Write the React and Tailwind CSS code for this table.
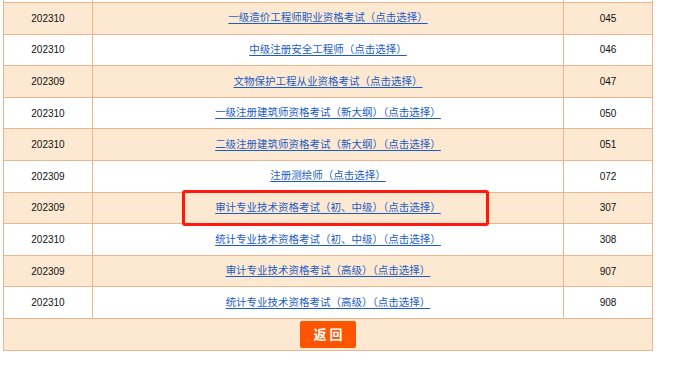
import React from "react";

const rows = [
  ["202310", "一级造价工程师职业资格考试（点击选择）", "045"],
  ["202310", "中级注册安全工程师（点击选择）", "046"],
  ["202309", "文物保护工程从业资格考试（点击选择）", "047"],
  ["202310", "一级注册建筑师资格考试（新大纲）（点击选择）", "050"],
  ["202310", "二级注册建筑师资格考试（新大纲）（点击选择）", "051"],
  ["202309", "注册测绘师（点击选择）", "072"],
  ["202309", "审计专业技术资格考试（初、中级）（点击选择）", "307"],
  ["202310", "统计专业技术资格考试（初、中级）（点击选择）", "308"],
  ["202309", "审计专业技术资格考试（高级）（点击选择）", "907"],
  ["202310", "统计专业技术资格考试（高级）（点击选择）", "908"],
];

const font = { fontFamily: '"Liberation Sans", "Noto Sans CJK SC", sans-serif' };

export default function App() {
  return (
    <div className="relative w-[679px] h-[374px] overflow-hidden bg-white" style={font}>
      <div className="pl-[3px] mt-[-28.6px]">
        <div className="w-[650px] border-l border-[#efb48c]">
          <div className="flex h-[31.6px] border-b border-[#efb48c] bg-white">
            <div className="w-[89px] border-r border-[#efb48c]" />
            <div className="w-[471px] border-r border-[#efb48c]" />
            <div className="w-[89px] border-r border-[#efb48c]" />
          </div>
          {rows.map((r, i) => (
            <div
              key={i}
              className={`flex h-[31.6px] border-b border-[#efb48c] ${i % 2 === 0 ? "bg-[#fde9d1]" : "bg-white"}`}
            >
              <div className="w-[89px] border-r border-[#efb48c] flex items-center justify-center text-[10px] text-[#111]">
                {r[0]}
              </div>
              <div className="w-[471px] border-r border-[#efb48c] flex items-center justify-center">
                <a className="text-[10.5px] text-[#1a5cc8] underline underline-offset-2 decoration-[#1a5cc8] cursor-pointer">
                  {r[1]}
                </a>
              </div>
              <div className="w-[89px] border-r border-[#efb48c] flex items-center justify-center text-[10px] text-[#111]">
                {r[2]}
              </div>
            </div>
          ))}
          <div className="flex h-[32px] items-center justify-center border-b border-r border-[#efb48c] bg-[#fde9d1]">
            <button className="w-[56px] h-[27px] rounded-[2px] bg-[#ff5500] text-white text-[13px] font-bold tracking-[3px] pl-[3px] flex items-center justify-center">
              返回
            </button>
          </div>
        </div>
      </div>
      <div className="absolute left-[182px] top-[190px] w-[307px] h-[36px] border-[3px] border-[#ff1a0d] rounded-[3px]" />
    </div>
  );
}
